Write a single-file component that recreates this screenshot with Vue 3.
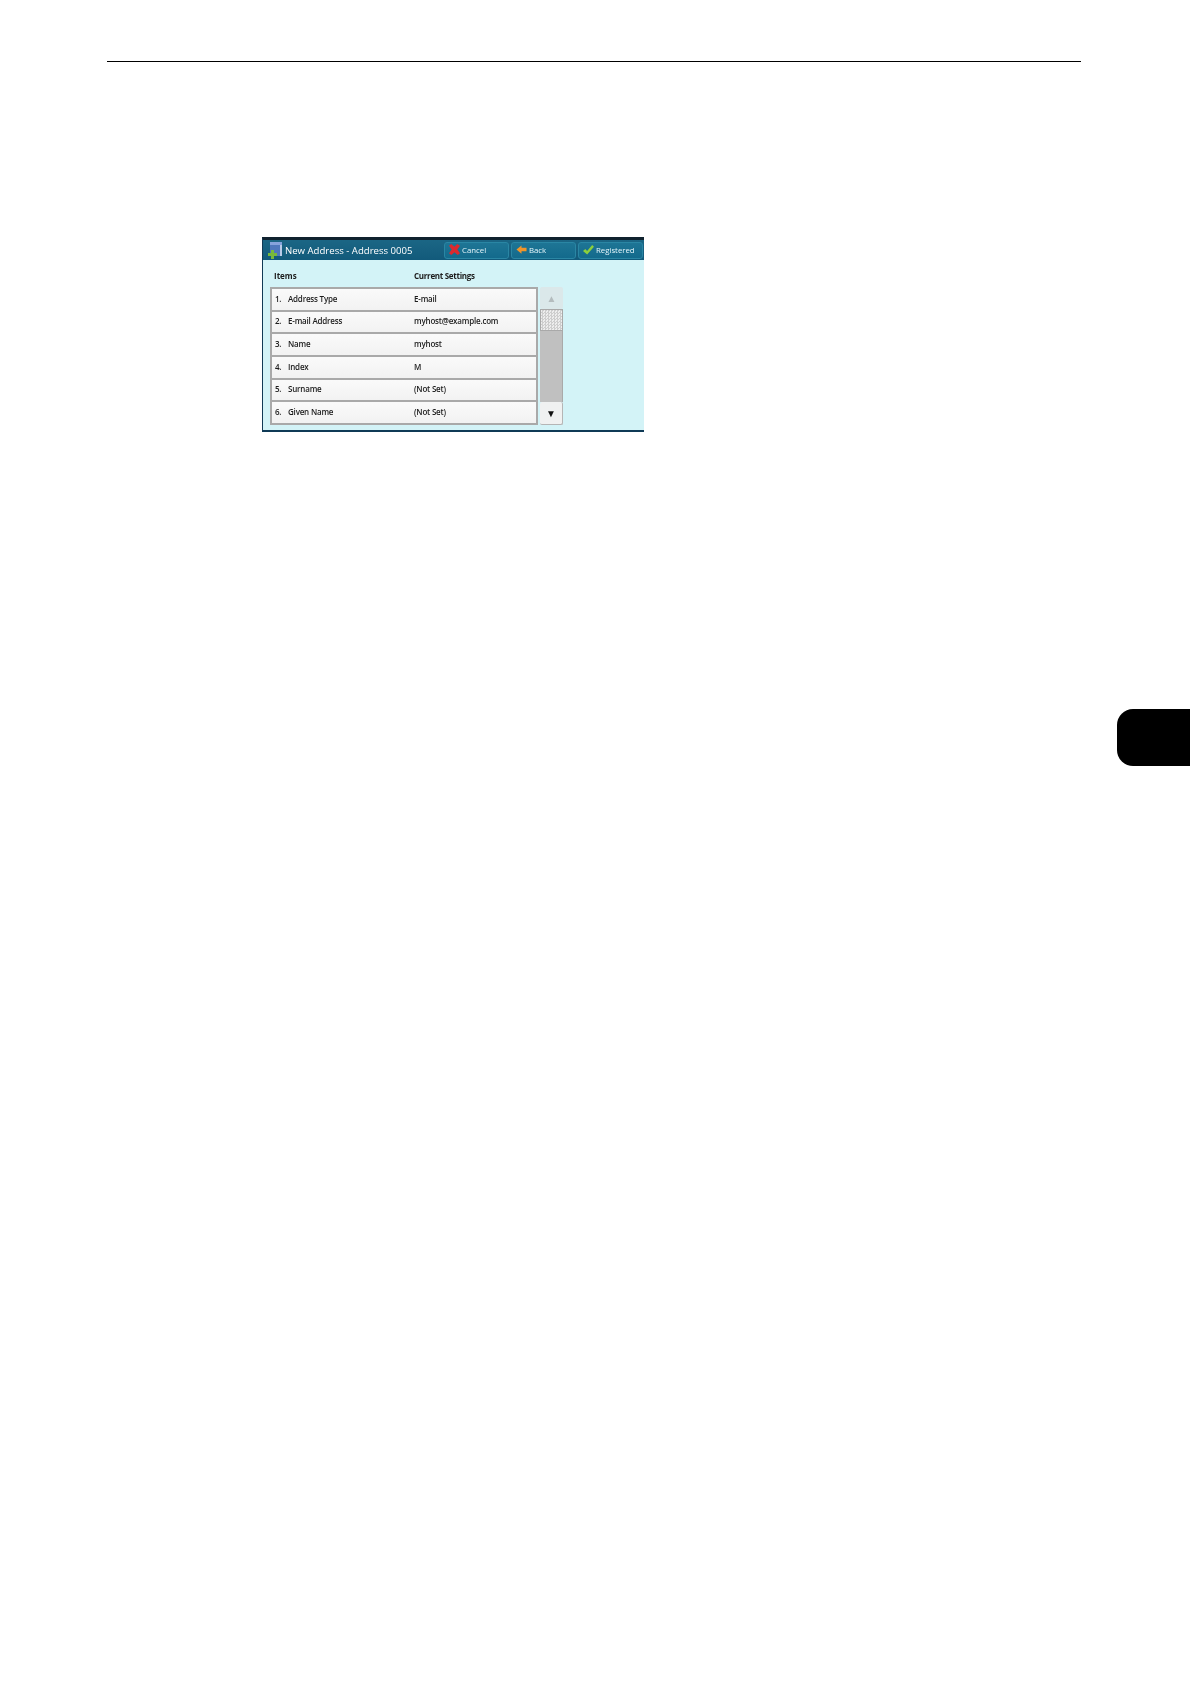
<script setup>
const rows = [
  { no: "1.", label: "Address Type", value: "E-mail" },
  { no: "2.", label: "E-mail Address", value: "myhost@example.com" },
  { no: "3.", label: "Name", value: "myhost" },
  { no: "4.", label: "Index", value: "M" },
  { no: "5.", label: "Surname", value: "(Not Set)" },
  { no: "6.", label: "Given Name", value: "(Not Set)" },
];
</script>

<template>
  <div class="page">
    <div class="rule"></div>

    <div class="screen">
      <div class="title-bar">
        <svg class="book" viewBox="0 0 16 18" width="16" height="18">
          <rect x="3" y="1" width="12" height="14" rx="1" fill="#4f78bd" />
          <rect x="3" y="1" width="12" height="3" fill="#86a3dc" />
          <rect x="13" y="4" width="2" height="11" fill="#b9cbe8" />
          <path d="M4 9h3v3h3v3H7v3H4v-3H1v-3h3z" fill="#78b93a" />
        </svg>
        <span class="title">New Address - Address 0005</span>
        <div class="actions">
          <div class="btn">
            <svg viewBox="0 0 12 12" width="11" height="11">
              <path d="M0 2l2.500-2L6 3l3-3 3 2-3 4 3 4-2.500 2L6 9l-3.500 3L0 10l3-4z" fill="#dc2a2e" />
            </svg>
            <span>Cancel</span>
          </div>
          <div class="btn">
            <svg viewBox="0 0 12 12" width="11" height="11">
              <path d="M0.500 6L6 1.500V4h5.500v4H6v2.500z" fill="#f0952a" />
            </svg>
            <span>Back</span>
          </div>
          <div class="btn">
            <svg viewBox="0 0 12 12" width="11" height="11">
              <path d="M0 7.500l2.500-2 2 2L10 1l2 2-7.500 8.500z" fill="#8ccf3c" />
            </svg>
            <span>Registered</span>
          </div>
        </div>
      </div>

      <div class="body">
        <div class="heads">
          <span class="head-items">Items</span>
          <span class="head-current">Current Settings</span>
        </div>
        <div class="list-wrap">
          <div class="list">
            <div v-for="row in rows" :key="row.no" class="row">
              <span class="no">{{ row.no }}</span>
              <span class="label">{{ row.label }}</span>
              <span class="value">{{ row.value }}</span>
            </div>
          </div>
          <div class="scroll">
            <div class="arrow up">▲</div>
            <div class="thumb"></div>
            <div class="track"></div>
            <div class="arrow down">▼</div>
          </div>
        </div>
      </div>
    </div>

    <div class="tab"></div>
  </div>
</template>

<style scoped>
.page {
  display: flex;
  flex-direction: column;
  width: 1190px;
  height: 1684px;
  padding-top: 61px;
  box-sizing: border-box;
  background: #fff;
  overflow: hidden;
  font-family: "Open Sans", "Liberation Sans", sans-serif;
}
.rule {
  width: 974px;
  height: 1px;
  margin-left: 107px;
  background: #000;
}
.screen {
  width: 382px;
  height: 195px;
  margin: 175px 0 0 262px;
  border-top: 3px solid #10222e;
  border-bottom: 2px solid #0f3a56;
  border-left: 1px solid #123a55;
  box-sizing: border-box;
  filter: blur(0.3px);
}
.title-bar {
  display: flex;
  align-items: center;
  height: 20px;
  padding-left: 4px;
  background: linear-gradient(#1b6685, #125a7b);
  color: #fff;
}
.book {
  flex: none;
}
.title {
  margin-left: 2px;
  font-size: 9.600px;
  font-weight: 500;
  white-space: nowrap;
}
.actions {
  display: flex;
  gap: 2px;
  margin-left: auto;
  padding-right: 1px;
}
.btn {
  display: flex;
  align-items: center;
  gap: 2px;
  width: 65px;
  height: 17px;
  padding-left: 4px;
  padding-bottom: 1px;
  box-sizing: border-box;
  border: 1px solid #2a86a4;
  border-radius: 3px;
  background: linear-gradient(#1e7595, #136a8c);
  font-size: 7.800px;
  font-weight: 500;
  color: #e6f6fb;
}
.body {
  height: 170px;
  padding: 7px 0 0 7px;
  box-sizing: border-box;
  background: #d3f3f7;
  font-size: 8px;
  color: #1c1c1c;
}
.heads {
  display: flex;
  height: 20px;
  font-weight: 700;
  line-height: 18px;
}
.head-items {
  width: 139px;
  padding-left: 4px;
  box-sizing: border-box;
}
.head-current {
  margin-left: 5px;
  letter-spacing: -0.300px;
}
.list-wrap {
  display: flex;
  gap: 2px;
  height: 138px;
}
.list {
  display: grid;
  grid-template-rows: repeat(6, 1fr);
  gap: 2px;
  width: 268px;
  padding: 2px;
  box-sizing: border-box;
  background: #a9a9a9;
}
.row {
  display: flex;
  align-items: center;
  padding-left: 3px;
  padding-bottom: 2px;
  background: linear-gradient(#fafafa, #f2f2f2);
  font-weight: 600;
  letter-spacing: -0.200px;
}
.no {
  width: 13px;
}
.label {
  width: 126px;
}
.scroll {
  display: flex;
  flex-direction: column;
  width: 23px;
}
.arrow {
  display: flex;
  align-items: center;
  justify-content: center;
  height: 22px;
  border-radius: 2px;
  background: #f0f1f1;
  font-size: 10px;
  color: #111;
}
.arrow.up {
  background: #dbe8ea;
  color: #b4bcbe;
}
.arrow.down {
  border-right: 1px solid #b5b5b5;
  border-bottom: 1px solid #b5b5b5;
}
.thumb {
  height: 22px;
  border: 1px solid #a9a9a9;
  box-sizing: border-box;
  background: repeating-conic-gradient(#cdcdcd 0 25%, #ededed 0 50%) 0 0 / 3px 3px;
}
.track {
  flex: 1;
  background: #c0c0c0;
  border-right: 1px solid #a9a9a9;
}
.tab {
  align-self: flex-end;
  width: 73px;
  height: 57px;
  margin-top: 277px;
  border-radius: 16px 0 0 16px;
  background: #000;
}
</style>
